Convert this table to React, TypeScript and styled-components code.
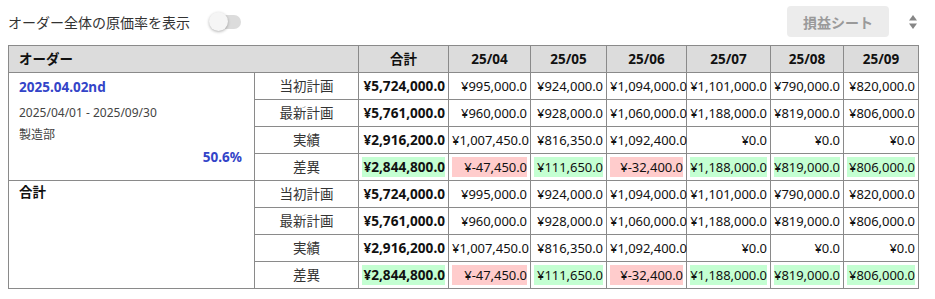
import React from "react";
import styled, { createGlobalStyle } from "styled-components";

const GlobalStyle = createGlobalStyle`
  html, body { margin: 0; padding: 0; background: #fff; }
  body {
    font-family: "Noto Sans", "Noto Sans CJK JP", sans-serif;
    color: #222;
  }
`;

const Page = styled.div`
  width: 910px;
  padding: 6px 8px 0 8px;
`;

const TopBar = styled.div`
  display: flex;
  align-items: center;
  justify-content: space-between;
  height: 31px;
  margin-bottom: 8px;
`;

const ToggleGroup = styled.label`
  display: flex;
  align-items: center;
  gap: 19px;
  font-size: 14px;
  color: #333;
`;

const SwitchTrack = styled.span`
  position: relative;
  display: inline-block;
  width: 29px;
  height: 14px;
  margin-left: 3px;
  border-radius: 7px;
  background: #dcdcdc;
`;

const SwitchThumb = styled.span`
  position: absolute;
  left: -3px;
  top: -3px;
  width: 19px;
  height: 19px;
  border-radius: 50%;
  background: #f5f5f5;
  box-shadow: 0 1px 3px rgba(0, 0, 0, 0.3);
`;

const RightGroup = styled.div`
  display: flex;
  align-items: center;
  gap: 20px;
  padding-right: 1px;
`;

const SheetButton = styled.button`
  height: 31px;
  width: 102px;
  border: none;
  border-radius: 4px;
  background: #ececec;
  color: #9a9a9a;
  font-family: inherit;
  font-size: 14px;
  font-weight: 700;
`;

const SortIcon = () => (
  <svg width="8" height="14" viewBox="0 0 8 14">
    <path d="M4 0 L8 5.5 L0 5.5 Z" fill="#868686" />
    <path d="M0 8.5 L8 8.5 L4 14 Z" fill="#868686" />
  </svg>
);

const Table = styled.table`
  width: 910px;
  table-layout: fixed;
  border-collapse: collapse;
  border: 1px solid #8a8a8a;
  font-size: 13px;
`;

const HeadCell = styled.th<{ $left?: boolean }>`
  background: #dcdcdc;
  border: 1px solid #8a8a8a;
  font-size: 13.5px;
  font-weight: 700;
  line-height: 20px;
  padding: 3px ${(p) => (p.$left ? "10px" : "3px")};
  text-align: ${(p) => (p.$left ? "left" : "center")};
  color: #111;
`;

const OrderCell = styled.td`
  border: 1px solid #8a8a8a;
  vertical-align: top;
  padding: 4px 12px 4px 10px;
`;

const OrderTitle = styled.div`
  font-size: 13.5px;
  font-weight: 700;
  line-height: 20px;
  color: #3344c8;
`;

const OrderMeta = styled.div<{ $first?: boolean }>`
  font-size: 12px;
  line-height: 20px;
  color: #444;
  margin-top: ${(p) => (p.$first ? "6px" : "2px")};
`;

const OrderRate = styled.div`
  text-align: right;
  font-size: 13.5px;
  font-weight: 700;
  line-height: 20px;
  margin-top: 2px;
  color: #3344c8;
`;

const TotalCell = styled.td`
  border: 1px solid #8a8a8a;
  vertical-align: top;
  padding: 1px 10px;
  font-size: 13.5px;
  font-weight: 700;
  line-height: 20px;
  color: #111;
`;

const LabelCell = styled.td`
  border: 1px solid #8a8a8a;
  text-align: center;
  font-size: 13.5px;
  line-height: 20px;
  padding: 3px;
  color: #333;
`;

const ValueCell = styled.td<{ $bold?: boolean }>`
  border: 1px solid #8a8a8a;
  text-align: right;
  line-height: 20px;
  padding: 3px;
  white-space: nowrap;
  font-size: ${(p) => (p.$bold ? "13.6px" : "13px")};
  letter-spacing: ${(p) => (p.$bold ? "0" : "-0.05px")};
  font-weight: ${(p) => (p.$bold ? 700 : 400)};
  color: #111;
`;

const Highlight = styled.div<{ $tone?: "pos" | "neg" }>`
  background: ${(p) => (p.$tone === "neg" ? "#ffcccc" : p.$tone === "pos" ? "#c4ffd2" : "transparent")};
`;

const months = ["25/04", "25/05", "25/06", "25/07", "25/08", "25/09"];
const colWidths = [246, 104, 90, 82, 76, 80, 84, 73, 75];

type Row = { label: string; total: string; values: string[]; diff?: boolean };

const rows: Row[] = [
  {
    label: "当初計画",
    total: "¥5,724,000.0",
    values: ["¥995,000.0", "¥924,000.0", "¥1,094,000.0", "¥1,101,000.0", "¥790,000.0", "¥820,000.0"],
  },
  {
    label: "最新計画",
    total: "¥5,761,000.0",
    values: ["¥960,000.0", "¥928,000.0", "¥1,060,000.0", "¥1,188,000.0", "¥819,000.0", "¥806,000.0"],
  },
  {
    label: "実績",
    total: "¥2,916,200.0",
    values: ["¥1,007,450.0", "¥816,350.0", "¥1,092,400.0", "¥0.0", "¥0.0", "¥0.0"],
  },
  {
    label: "差異",
    total: "¥2,844,800.0",
    values: ["¥-47,450.0", "¥111,650.0", "¥-32,400.0", "¥1,188,000.0", "¥819,000.0", "¥806,000.0"],
    diff: true,
  },
];

const tone = (v: string): "pos" | "neg" => (v.includes("-") ? "neg" : "pos");

const renderCells = (r: Row) => (
  <>
    <LabelCell>{r.label}</LabelCell>
    <ValueCell $bold>{r.diff ? <Highlight $tone={tone(r.total)}>{r.total}</Highlight> : r.total}</ValueCell>
    {r.values.map((v, i) => (
      <ValueCell key={i}>{r.diff ? <Highlight $tone={tone(v)}>{v}</Highlight> : v}</ValueCell>
    ))}
  </>
);

export default function App() {
  return (
    <>
      <GlobalStyle />
      <Page>
        <TopBar>
          <ToggleGroup>
            オーダー全体の原価率を表示
            <SwitchTrack>
              <SwitchThumb />
            </SwitchTrack>
          </ToggleGroup>
          <RightGroup>
            <SheetButton>損益シート</SheetButton>
            <SortIcon />
          </RightGroup>
        </TopBar>
        <Table>
          <colgroup>
            {colWidths.map((w, i) => (
              <col key={i} style={{ width: w }} />
            ))}
          </colgroup>
          <thead>
            <tr>
              <HeadCell colSpan={2} $left>
                オーダー
              </HeadCell>
              <HeadCell>合計</HeadCell>
              {months.map((m) => (
                <HeadCell key={m}>{m}</HeadCell>
              ))}
            </tr>
          </thead>
          <tbody>
            {rows.map((r, i) => (
              <tr key={"a" + i}>
                {i === 0 && (
                  <OrderCell rowSpan={4}>
                    <OrderTitle>2025.04.02nd</OrderTitle>
                    <OrderMeta $first>2025/04/01 - 2025/09/30</OrderMeta>
                    <OrderMeta>製造部</OrderMeta>
                    <OrderRate>50.6%</OrderRate>
                  </OrderCell>
                )}
                {renderCells(r)}
              </tr>
            ))}
            {rows.map((r, i) => (
              <tr key={"b" + i}>
                {i === 0 && <TotalCell rowSpan={4}>合計</TotalCell>}
                {renderCells(r)}
              </tr>
            ))}
          </tbody>
        </Table>
      </Page>
    </>
  );
}
